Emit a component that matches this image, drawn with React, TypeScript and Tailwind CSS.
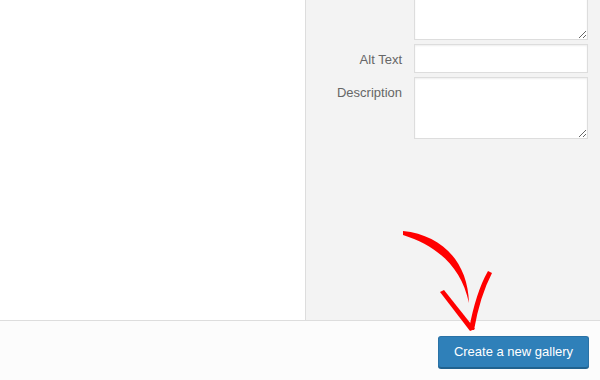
import React from 'react';

const Arrow: React.FC = () => (
  <svg className="pointer-events-none absolute left-0 top-0" width="600" height="380" viewBox="0 0 600 380">
    {/* shaft */}
    <path d="M403 231 C442 235 468 262 469 303 C461 266 437 246 403 235 Z" fill="#ff0000" />
    {/* left head */}
    <path d="M440 292 L444 290 L475 329 L470 331 Z" fill="#ff0000" />
    {/* right head */}
    <path d="M492 273 Q480 296 474 330 L469 329 Q476 292 488 271 Z" fill="#ff0000" />
  </svg>
);

const App: React.FC = () => {
  return (
    <div className="relative flex h-[380px] w-[600px] flex-col overflow-hidden bg-white font-['Liberation_Sans',Arial,sans-serif]">
      {/* Content */}
      <div className="flex h-[320px]">
        <div className="w-[305px] bg-white"></div>
        <aside className="flex flex-1 flex-col gap-[4px] border-l border-[#dddddd] bg-[#f3f3f3] pr-[12px]">
          <div className="mt-[-21px] flex gap-[12px]">
            <div className="w-[96px]"></div>
            <textarea className="h-[61px] w-[174px] resize rounded-none border border-[#dddddd] bg-white shadow-[inset_0_1px_2px_rgba(0,0,0,0.07)] outline-none" />
          </div>
          <div className="flex gap-[12px]">
            <label className="w-[96px] pt-[6px] text-right text-[13px] text-[#666666]">Alt Text</label>
            <input className="h-[29px] w-[174px] border border-[#dddddd] bg-white shadow-[inset_0_1px_2px_rgba(0,0,0,0.07)] outline-none" />
          </div>
          <div className="flex gap-[12px]">
            <label className="w-[96px] pt-[6px] text-right text-[13px] text-[#666666]">Description</label>
            <textarea className="h-[62px] w-[174px] resize border border-[#dddddd] bg-white shadow-[inset_0_1px_2px_rgba(0,0,0,0.07)] outline-none" />
          </div>
        </aside>
      </div>

      {/* Footer toolbar */}
      <footer className="flex flex-1 items-start justify-end border-t border-[#dddddd] bg-[#fcfcfc] pr-[11px] pt-[15px]">
        <button className="h-[32px] w-[151px] rounded-[3px] border border-[#2a72a6] border-b-[#20628f] bg-[#2f80b9] text-[13px] text-white shadow-[0_1px_0_#20628f]">
          Create a new gallery
        </button>
      </footer>

      <Arrow />
    </div>
  );
};

export default App;
